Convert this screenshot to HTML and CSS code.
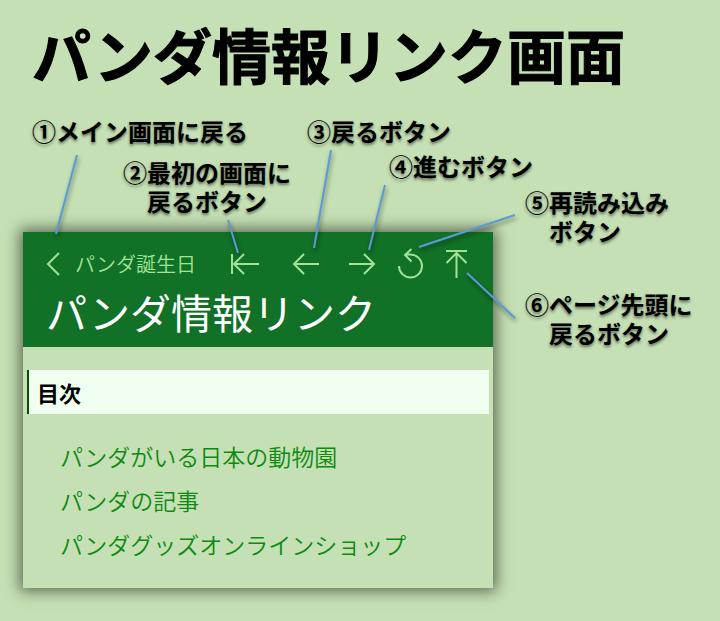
FILE: index.html
```html
<!DOCTYPE html>
<html lang="ja">
<head>
<meta charset="utf-8">
<meta name="viewport" content="width=device-width, initial-scale=1">
<title>パンダ情報リンク画面</title>
<link rel="stylesheet" href="styles.css">
</head>
<body>
<main class="page">
  <h1 class="page-title">パンダ情報リンク画面</h1>
  <div class="diagram">
    <section class="screen">
      <header class="bar">
        <nav class="toolbar">
          <a class="back" href="#">
            <svg class="chevron" viewBox="0 0 14 24" aria-hidden="true"><path d="M13 1 2 12l11 11"/></svg>
            <span>パンダ誕生日</span>
          </a>
          <div class="tools">
            <button class="tool" type="button" aria-label="最初の画面に戻る"><svg viewBox="0 0 32 32" aria-hidden="true"><path d="M3 6v20M30 16H5M15 6 5 16l10 10"/></svg></button>
            <button class="tool" type="button" aria-label="戻る"><svg viewBox="0 0 32 32" aria-hidden="true"><path d="M29 16H4M14 6 4 16l10 10"/></svg></button>
            <button class="tool" type="button" aria-label="進む"><svg viewBox="0 0 32 32" aria-hidden="true"><path d="M2 16h25M17 6l10 10-10 10"/></svg></button>
            <button class="tool" type="button" aria-label="再読み込み"><svg viewBox="0 0 32 32" aria-hidden="true"><path d="M5 18a11.500 11.500 0 1 0 11.500-11.500H11M17.500 1l-6.500 6 6.500 6.500"/></svg></button>
            <button class="tool" type="button" aria-label="ページ先頭に戻る"><svg viewBox="0 0 32 32" aria-hidden="true"><path d="M5 3h21M15.500 30V5M5.500 15l10-10 10 10"/></svg></button>
          </div>
        </nav>
        <h2 class="bar-title">パンダ情報リンク</h2>
      </header>
      <div class="content">
        <h3 class="toc-title">目次</h3>
        <ul class="toc">
          <li><a href="#">パンダがいる日本の動物園</a></li>
          <li><a href="#">パンダの記事</a></li>
          <li><a href="#">パンダグッズオンラインショップ</a></li>
        </ul>
      </div>
    </section>
    <svg class="leaders" viewBox="0 0 720 480" width="720" height="480" aria-hidden="true">
      <path d="M77 43 56 122M228 108 238 141M331 38 314 136M385 73 369 138M515 103 419 135M467 161 515 206"/>
    </svg>
    <p class="note note-main">①メイン画面に戻る</p>
    <p class="note note-first">②最初の画面に<br>戻るボタン</p>
    <p class="note note-back">③戻るボタン</p>
    <p class="note note-forward">④進むボタン</p>
    <p class="note note-reload">⑤再読み込み<br>ボタン</p>
    <p class="note note-top">⑥ページ先頭に<br>戻るボタン</p>
  </div>
</main>
</body>
</html>
```
FILE: styles.css
```css
* {
  box-sizing: border-box;
}

body {
  margin: 0;
  background: #c5e0b4;
  color: #000;
  font-family: "Noto Sans CJK JP", "Noto Sans", sans-serif;
}

h1, h2, h3, p, ul {
  margin: 0;
  padding: 0;
}

a {
  color: inherit;
  text-decoration: none;
}

.page-title {
  padding: 10px 32px 2px;
  font-size: 59px;
  line-height: 88px;
  font-weight: 700;
  white-space: nowrap;
  -webkit-text-stroke: 1px #000;
  stroke-linejoin: round;
}

.diagram {
  position: relative;
  padding: 132px 227px 33px 23px;
}

.screen {
  background: #c5e0b4;
  box-shadow: 0 0 14px 3px rgba(0, 0, 0, 0.55);
}

.bar {
  padding: 16px 20px 5px 23px;
  background: #117127;
  color: #a1e496;
}

.toolbar {
  display: flex;
  align-items: center;
  justify-content: space-between;
}

.back {
  display: flex;
  align-items: center;
  gap: 15px;
  font-size: 20px;
  line-height: 32px;
  font-weight: 350;
  white-space: nowrap;
}

.chevron {
  width: 14px;
  height: 24px;
}

.tools {
  display: flex;
  align-items: center;
  gap: 15px;
}

.tool {
  width: 32px;
  height: 32px;
  padding: 0;
  border: 0;
  background: none;
  color: inherit;
}

.tool:first-child {
  margin-right: 14px;
}

.tool:nth-child(2) {
  margin-right: 10px;
}

.tool svg {
  display: block;
  width: 32px;
  height: 32px;
}

.tool path,
.chevron path {
  fill: none;
  stroke: currentColor;
  stroke-width: 2;
}

.bar-title {
  color: #fff;
  font-size: 41px;
  line-height: 62px;
  font-weight: 400;
  white-space: nowrap;
}

.content {
  padding: 23px 4px 22px;
}

.toc-title {
  padding-left: 8px;
  border-left: 2px solid #0b4a10;
  background: #f0fff0;
  font-size: 22px;
  line-height: 44px;
  font-weight: 700;
}

.toc {
  padding: 20px 0 0 33px;
  list-style: none;
  color: #0d8a12;
  font-size: 23px;
  line-height: 44px;
  font-weight: 350;
}

.leaders {
  position: absolute;
  top: 12px;
  left: 0;
  fill: none;
  stroke: #5b9bd5;
  stroke-width: 2;
  filter: drop-shadow(1px 3px 2px rgba(0, 0, 0, 0.45));
  pointer-events: none;
}

.note {
  position: absolute;
  padding-left: 24px;
  text-indent: -24px;
  font-size: 24px;
  line-height: 29px;
  font-weight: 700;
  white-space: nowrap;
  text-shadow: 0 2px 3px rgba(0, 0, 0, 0.5);
}

.note-main {
  top: 16px;
  left: 32px;
}

.note-first {
  top: 57px;
  left: 123px;
}

.note-back {
  top: 16px;
  left: 307px;
}

.note-forward {
  top: 51px;
  left: 389px;
}

.note-reload {
  top: 87px;
  left: 525px;
}

.note-top {
  top: 189px;
  left: 525px;
}
```
